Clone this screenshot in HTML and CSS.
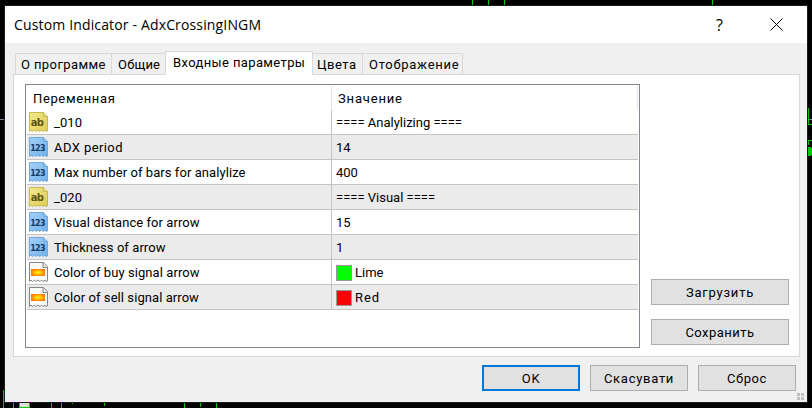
FILE: index.html
```
<!DOCTYPE html>
<html lang="ru">
<head>
<meta charset="utf-8">
<title>Custom Indicator - AdxCrossingINGM</title>
<link rel="stylesheet" href="styles.css">
</head>
<body>
<svg class="chart" width="812" height="408" shape-rendering="crispEdges">
  <path d="M0 119.5h5M808 119.5h4" stroke="#778899"/>
  <path d="M472.500 0v6M488.500 0v6M504.500 0v6M499 5.500h11M712.500 0v6M3.500 408v-18M3 390.500h2M13.500 402v6M51.500 402v6M61.500 402v6M72.500 402v2M104.500 402v4M120.500 402v1M184.500 402v6M200.500 402v5M216.500 402v6M808.500 108v17M808 124.500h4M808 140.500h4M808.500 140v5" stroke="#00c800" fill="none"/>
  <path d="M808 147h3v1h1v7h-1v1h-3z" fill="#00c800"/>
  <rect x="19.500" y="400.500" width="10" height="7" fill="#ddd" stroke="#00c800"/>
</svg>
<svg width="0" height="0" class="defs">
  <defs>
    <linearGradient id="gy" x1="0" y1="0" x2="1" y2="1"><stop offset="0" stop-color="#f3ea92"/><stop offset="1" stop-color="#dccb52"/></linearGradient>
    <linearGradient id="gb" x1="0" y1="0" x2="1" y2="1"><stop offset="0" stop-color="#a5d1f7"/><stop offset="1" stop-color="#6fb0ea"/></linearGradient>
    <radialGradient id="go"><stop offset="0" stop-color="#ffee20"/><stop offset=".45" stop-color="#ffc800"/><stop offset="1" stop-color="#ff7c00"/></radialGradient>
    <path id="sheet" d="M1.500.5h14l4 4v14.500l-1.500 .5-1-1.500-2 1.500-1.500-1.500-1.500 1.500-2-1.500-2 1.500-1.500-1.500-2 1.500-1.500-1.500-1.500 1.500z"/>
  </defs>
</svg>
<main class="dialog">
  <header class="titlebar">
    <h1>Custom Indicator - AdxCrossingINGM</h1>
    <span class="help">?</span>
    <svg class="close" width="13" height="13" viewBox="0 0 13 13"><path d="M.5.5l12 12M12.500.5l-12 12" stroke="#000"/></svg>
  </header>
  <nav class="tabs">
    <span class="tab t1">О программе</span><span class="tab t2">Общие</span><span class="tab active t3">Входные параметры</span><span class="tab t4">Цвета</span><span class="tab t5">Отображение</span>
  </nav>
  <section class="pane">
    <div class="table">
      <div class="row head"><div class="name">Переменная</div><div class="value">Значение</div></div>
      <div class="row"><div class="name"><svg class="icon ab" viewBox="0 0 21 21"><use href="#sheet"/><path class="fold" d="M15.500.5v4h4"/><text x="9" y="14">ab</text></svg>_010</div><div class="value">==== Analylizing ====</div></div>
      <div class="row alt"><div class="name wide"><svg class="icon num" viewBox="0 0 21 21"><use href="#sheet"/><path class="fold" d="M15.500.5v4h4"/><text x="9.500" y="14">123</text></svg>ADX period</div><div class="value">14</div></div>
      <div class="row"><div class="name"><svg class="icon num" viewBox="0 0 21 21"><use href="#sheet"/><path class="fold" d="M15.500.5v4h4"/><text x="9.500" y="14">123</text></svg>Max number of bars for analylize</div><div class="value">400</div></div>
      <div class="row alt"><div class="name"><svg class="icon ab" viewBox="0 0 21 21"><use href="#sheet"/><path class="fold" d="M15.500.5v4h4"/><text x="9" y="14">ab</text></svg>_020</div><div class="value">==== Visual ====</div></div>
      <div class="row"><div class="name"><svg class="icon num" viewBox="0 0 21 21"><use href="#sheet"/><path class="fold" d="M15.500.5v4h4"/><text x="9.500" y="14">123</text></svg>Visual distance for arrow</div><div class="value">15</div></div>
      <div class="row alt"><div class="name"><svg class="icon num" viewBox="0 0 21 21"><use href="#sheet"/><path class="fold" d="M15.500.5v4h4"/><text x="9.500" y="14">123</text></svg>Thickness of arrow</div><div class="value">1</div></div>
      <div class="row"><div class="name"><svg class="icon col" viewBox="0 0 21 21"><use href="#sheet"/><path class="fold" d="M15 .5v5h4.500"/><rect x="3" y="7" width="14" height="7" fill="url(#go)"/></svg>Color of buy signal arrow</div><div class="value"><i class="swatch lime"></i>Lime</div></div>
      <div class="row alt"><div class="name"><svg class="icon col" viewBox="0 0 21 21"><use href="#sheet"/><path class="fold" d="M15 .5v5h4.500"/><rect x="3" y="7" width="14" height="7" fill="url(#go)"/></svg>Color of sell signal arrow</div><div class="value red-value"><i class="swatch red"></i>Red</div></div>
    </div>
    <div class="side">
      <button class="load">Загрузить</button>
      <button class="save">Сохранить</button>
    </div>
  </section>
  <footer class="actions">
    <button class="primary">OK</button>
    <button class="cancel">Скасувати</button>
    <button class="reset">Сброс</button>
  </footer>
  <div class="grip"><i></i><i></i><i></i><i></i></div>
</main>
</body>
</html>
```
FILE: styles.css
```
* { box-sizing: border-box; }
body {
  margin: 0;
  width: 812px;
  height: 408px;
  overflow: hidden;
  background: #000;
  color: #000;
  font: 13px/16px Roboto, "Liberation Sans", sans-serif;
  padding: 6px 5px;
}
.chart, .defs { position: absolute; left: 0; top: 0; }
.dialog {
  position: relative;
  width: 802px;
  height: 396px;
  background: #f0f0f0;
  box-shadow: 0 0 0 1px #1c1c1c;
}
.titlebar {
  height: 37px;
  background: #fff;
  display: flex;
  align-items: center;
  padding: 0 24px 0 9px;
}
h1 {
  flex: 1;
  margin: 0;
  font: 14px/20px "Open Sans", sans-serif;
  letter-spacing: .15px;
}
.help { font: 16px/20px "Open Sans", sans-serif; margin-right: 47px; }
.close { display: block; }
.tabs {
  display: flex;
  align-items: flex-end;
  height: 31px;
  padding-left: 10px;
}
.tab {
  height: 21px;
  border: 1px solid #d9d9d9;
  border-bottom: 0;
  padding: 3px 0 0 5px;
  margin-right: -1px;
  white-space: nowrap;
}
.tab.active {
  position: relative;
  z-index: 1;
  height: 24px;
  margin-bottom: -1px;
  background: #fff;
  padding: 3px 0 0 7px;
}
.t1 { width: 97px; letter-spacing: .4px; }
.t2 { width: 55px; padding-left: 6px; letter-spacing: .2px; }
.t3 { width: 148px; letter-spacing: .37px; }
.t4 { width: 51px; padding-left: 4px; letter-spacing: .5px; }
.t5 { width: 101px; padding-left: 6px; letter-spacing: .72px; }
.pane {
  width: 787px;
  height: 283px;
  margin-left: 8px;
  background: #fff;
  border: 1px solid #d9d9d9;
  padding: 9px 10px 8px 11px;
  display: flex;
  justify-content: space-between;
}
.table {
  width: 615px;
  height: 264px;
  border: 1px solid #828790;
  padding: 1px;
}
.row {
  display: grid;
  grid-template-columns: 304px 1fr;
  height: 25px;
  border-bottom: 1px solid #c4c4c4;
}
.row > div { display: flex; align-items: center; padding-top: 1px; }
.name { letter-spacing: .07px; white-space: nowrap; padding-left: 1px; }
.name.wide { letter-spacing: .42px; }
.value { border-left: 1px solid #c4c4c4; padding-left: 4px; }
.alt { background: #ebebeb; }
.head { height: 24px; border-bottom: 0; }
.row.head > .name { letter-spacing: .63px; padding: 2px 0 0 6px; }
.row.head > .value {
  letter-spacing: .83px;
  padding: 2px 0 0 6px;
  border-left-color: #e5e5e5;
  border-right: 1px solid #e5e5e5;
}
.icon { width: 21px; height: 21px; margin-right: 5px; flex: none; }
.icon text {
  text-anchor: middle;
  font-family: "DejaVu Sans", sans-serif;
  font-weight: bold;
  stroke: none;
}
.ab { fill: url(#gy); stroke: #c8b850; }
.ab text { font-size: 10px; letter-spacing: -.8px; fill: #5c5518; }
.ab .fold { fill: #eee388; }
.num { fill: url(#gb); stroke: #6fa8da; }
.num text { font-size: 8px; letter-spacing: -.8px; fill: #143a68; }
.num .fold { fill: #94c7f4; }
.col { fill: #fafafa; stroke: #858585; }
.col .fold { fill: #e7e7e7; }
.col rect { stroke: none; }
.swatch { width: 16px; height: 16px; margin-right: 3px; border: 1px solid #999; }
.lime { background: #0f0; }
.red { background: #f00; }
.red-value { letter-spacing: .9px; }
.side {
  width: 138px;
  display: flex;
  flex-direction: column;
  justify-content: flex-end;
  gap: 14px;
  padding-bottom: 3px;
}
button {
  height: 26px;
  padding: 1px 0 0;
  border: 1px solid #adadad;
  background: #e1e1e1;
  color: #000;
  font: inherit;
}
.load { letter-spacing: .78px; }
.save { letter-spacing: .48px; }
.actions {
  display: flex;
  justify-content: flex-end;
  gap: 10px;
  padding: 8px 11px 0 0;
}
.actions button { width: 98px; }
.actions .primary { border: 2px solid #0078d7; letter-spacing: .6px; }
.cancel { letter-spacing: .72px; }
.reset { letter-spacing: .6px; }
.grip {
  position: absolute;
  right: 3px;
  bottom: 2px;
  display: grid;
  grid-template-columns: 3px 3px;
  gap: 1px;
}
.grip i { height: 3px; background: #bfbfbf; }
```
